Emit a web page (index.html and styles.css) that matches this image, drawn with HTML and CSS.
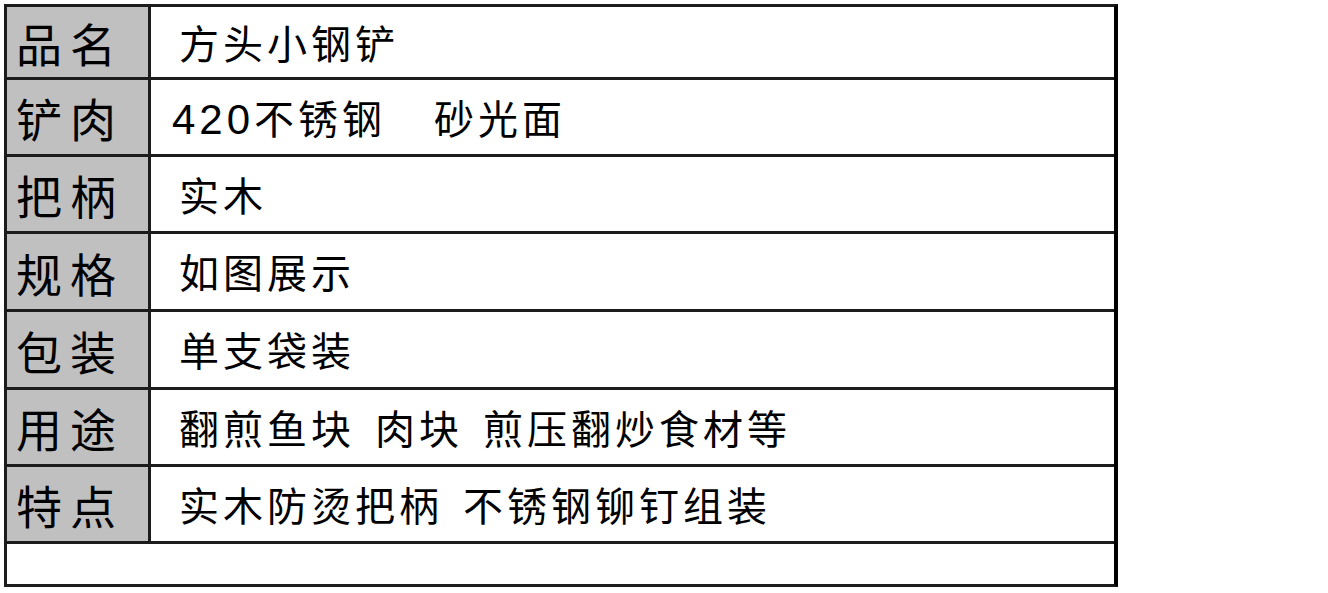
FILE: index.html
```html
<!DOCTYPE html>
<html lang="zh-CN">
<head>
<meta charset="utf-8">
<title>方头小钢铲</title>
<link rel="stylesheet" href="styles.css">
</head>
<body>
<div class="sheet">
  <div class="row r1"><div class="label">品名</div><div class="value">方头小钢铲</div></div>
  <div class="row r2"><div class="label">铲肉</div><div class="value value-num"><span class="num">420</span>不锈钢<span class="sp sp-wide"></span>砂光面</div></div>
  <div class="row r3"><div class="label">把柄</div><div class="value">实木</div></div>
  <div class="row r4"><div class="label">规格</div><div class="value">如图展示</div></div>
  <div class="row r5"><div class="label">包装</div><div class="value">单支袋装</div></div>
  <div class="row r6"><div class="label">用途</div><div class="value">翻煎鱼块<span class="sp"></span>肉块<span class="sp"></span>煎压翻炒食材等</div></div>
  <div class="row r7"><div class="label">特点</div><div class="value">实木防烫把柄<span class="sp"></span>不锈钢铆钉组装</div></div>
  <div class="row r8 empty"></div>
</div>
</body>
</html>
```

FILE: styles.css
```css
html, body {
  margin: 0;
  padding: 0;
  background: #ffffff;
}

body {
  padding: 4px;
  font-family: "Liberation Sans", "Noto Sans CJK SC", sans-serif;
  color: #000;
}

.sheet {
  width: 1114px;
  box-sizing: border-box;
  border: 3px solid #1c1c1c;
  border-right: 4px solid #000;
  display: flex;
  flex-direction: column;
}

.row {
  display: flex;
  border-bottom: 3px solid #1c1c1c;
}

.r1 { height: 70px; }
.r2 { height: 74px; }
.r3 { height: 74px; }
.r4 { height: 75px; }
.r5 { height: 75px; }
.r6 { height: 74px; }
.r7 { height: 74px; }
.r8 { height: 40px; border-bottom: none; }

.label {
  width: 144px;
  flex: none;
  background: #c0c0c0;
  border-right: 3px solid #1c1c1c;
  display: flex;
  align-items: center;
  padding-left: 9px;
  box-sizing: border-box;
  font-family: "Noto Sans CJK SC", sans-serif;
  font-size: 46px;
  letter-spacing: 8px;
  line-height: 1;
  white-space: nowrap;
}

.value {
  flex: 1;
  display: flex;
  align-items: center;
  padding-left: 28px;
  padding-top: 5px;
  box-sizing: border-box;
  font-size: 40px;
  letter-spacing: 4px;
  line-height: 1;
  white-space: nowrap;
}

.value-num {
  padding-left: 21px;
}

.num {
  font-size: 42px;
  letter-spacing: 4px;
}

.sp {
  display: inline-block;
  width: 20px;
  flex: none;
}

.sp-wide {
  width: 48px;
}
```
